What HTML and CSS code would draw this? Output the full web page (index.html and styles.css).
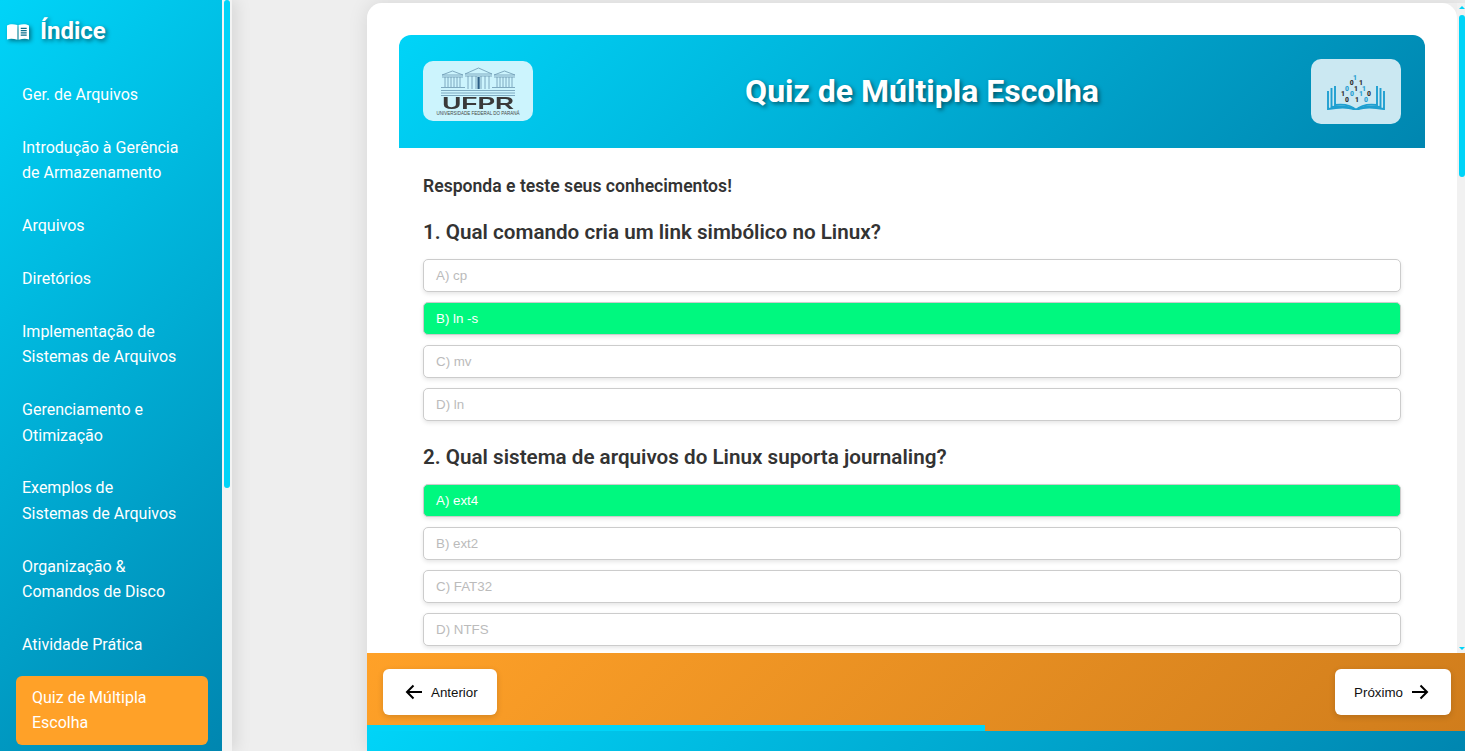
FILE: index.html
```html
<!DOCTYPE html>
<html lang="pt-BR">
<head>
  <meta charset="UTF-8">
  <title>Quiz de Múltipla Escolha</title>
  <link rel="stylesheet" href="styles.css">
</head>
<body>

<aside class="sidebar">
  <nav class="menu">
    <h2 class="menu-title">
      <svg class="menu-icon" viewBox="0 0 24 18">
        <path d="M0 2.500C3 .8 7 .6 11.400 2v16C7 16.800 3 16.800 0 17.600z" fill="#fff"/>
        <path d="M12.600 2C17 .6 21 .8 24 2.500v15.100c-3-.8-7-.8-11.400.4z" fill="#fff"/>
        <path d="M15 5.500h6.500M15 8h6.500M15 10.500h6.500M15 13h6.500" stroke="#0a6f8c" stroke-width="1.300"/>
      </svg>
      Índice
    </h2>
    <a class="menu-link" href="#">Ger. de Arquivos</a>
    <a class="menu-link" href="#">Introdução à Gerência<br>de Armazenamento</a>
    <a class="menu-link" href="#">Arquivos</a>
    <a class="menu-link" href="#">Diretórios</a>
    <a class="menu-link" href="#">Implementação de<br>Sistemas de Arquivos</a>
    <a class="menu-link" href="#">Gerenciamento e<br>Otimização</a>
    <a class="menu-link" href="#">Exemplos de<br>Sistemas de Arquivos</a>
    <a class="menu-link" href="#">Organização &amp;<br>Comandos de Disco</a>
    <a class="menu-link" href="#">Atividade Prática</a>
    <a class="menu-link active" href="#">Quiz de Múltipla<br>Escolha</a>
  </nav>
  <div class="side-scroll"><div class="side-thumb"></div></div>
</aside>

<main class="main">
  <div class="panel">
    <div class="panel-top">
      <div class="quiz-area">
        <header class="quiz-header">
          <div class="logo logo-ufpr">
            <svg class="ufpr-art" viewBox="0 0 74 29">
              <g fill="none" stroke="#6a97b0" stroke-width="0.800">
                <path d="M1 8h21L11.500 4zM24 7h27L37.500 1zM53 8h21L63.500 4z"/>
                <path d="M1 10h21M24 9h27M53 10h21"/>
                <path d="M4 10v10M7 10v10M10 10v10M13 10v10M16 10v10M19 10v10"/>
                <path d="M56 10v10M59 10v10M62 10v10M65 10v10M68 10v10M71 10v10"/>
                <path d="M27 9v13M31 9v13M35 9v13M40 9v13M44 9v13M48 9v13"/>
                <path d="M0 20.500h24M51 20.500h23M0 23.500h74M0 26h74M0 28.500h74"/>
              </g>
              <path d="M36.500 10h2.200v12h-2.200z" fill="#2c5f86"/>
            </svg>
            <span class="ufpr-name">UFPR</span>
            <span class="ufpr-sub">UNIVERSIDADE FEDERAL DO PARANÁ</span>
          </div>
          <h1 class="quiz-title">Quiz de Múltipla Escolha</h1>
          <div class="logo logo-book">
            <svg class="book-art" viewBox="0 0 58 36">
              <g font-family="Roboto, sans-serif" font-size="6.800" font-weight="900" text-anchor="middle">
                <text x="28" y="5.500" fill="#2a9fd0">1</text>
                <text x="24.700" y="11" fill="#333">0</text>
                <text x="34" y="11" fill="#333">1</text>
                <text x="20" y="16.500" fill="#2a9fd0">0</text>
                <text x="29" y="16.500" fill="#333">1</text>
                <text x="37" y="16.500" fill="#2a9fd0">1</text>
                <text x="16" y="22" fill="#333">1</text>
                <text x="25" y="22" fill="#2a9fd0">0</text>
                <text x="34" y="22" fill="#2a9fd0">1</text>
                <text x="42" y="22" fill="#333">0</text>
                <text x="20" y="27.500" fill="#333">0</text>
                <text x="30" y="27.500" fill="#333">1</text>
                <text x="39" y="27.500" fill="#2a9fd0">0</text>
              </g>
              <g fill="none" stroke="#1f9fd0" stroke-width="1.900">
                <path d="M1 17v18c11-2 22-2 28 1c6-3 17-3 28-1V17"/>
                <path d="M4.500 14v19c9-1 19-1 24.500 3c5.500-4 15.500-4 24.500-3V14"/>
                <path d="M8 12v19c8-1 16 0 21 5c5-5 13-6 21-5V12"/>
              </g>
            </svg>
          </div>
        </header>

        <section class="quiz-body">
          <p class="quiz-lead">Responda e teste seus conhecimentos!</p>

          <div class="question">
            <h3>1. Qual comando cria um link simbólico no Linux?</h3>
            <button class="option">A) cp</button>
            <button class="option correct">B) ln -s</button>
            <button class="option">C) mv</button>
            <button class="option">D) ln</button>
          </div>

          <div class="question">
            <h3>2. Qual sistema de arquivos do Linux suporta journaling?</h3>
            <button class="option correct">A) ext4</button>
            <button class="option">B) ext2</button>
            <button class="option">C) FAT32</button>
            <button class="option">D) NTFS</button>
          </div>
        </section>
      </div>

      <div class="quiz-scroll">
        <span class="arrow-up"></span>
        <div class="quiz-thumb"></div>
        <span class="arrow-down"></span>
      </div>
    </div>

    <div class="pager">
      <button class="pager-btn btn-prev">
        <svg class="pager-icon" viewBox="0 0 18 16"><path d="M17 8H2M8.500 1.500L2 8l6.500 6.500"/></svg>
        Anterior
      </button>
      <button class="pager-btn btn-next">
        Próximo
        <svg class="pager-icon" viewBox="0 0 18 16"><path d="M1 8h15M9.500 1.500L16 8l-6.500 6.500"/></svg>
      </button>
      <div class="progress-fill" style="width: 56.3%"></div>
    </div>

    <div class="bottom-bar"></div>
  </div>
</main>

</body>
</html>
```

FILE: styles.css
```css
* {
  box-sizing: border-box;
}

html, body {
  height: 100%;
  margin: 0;
  overflow: hidden;
}

body {
  display: flex;
  font-family: 'Roboto', sans-serif;
  background: #eeeeee;
  color: #333;
}

/* sidebar */
.sidebar {
  width: 232px;
  flex-shrink: 0;
  display: flex;
  position: relative;
  z-index: 2;
  box-shadow: 4px 0 15px rgba(0,0,0,0.1);
}

.menu {
  width: 222px;
  height: 100%;
  padding: 0 14px 0 16px;
  background: linear-gradient(135deg, #00d4f8, #0086b0);
  overflow: hidden;
}

.menu-title {
  display: flex;
  align-items: center;
  gap: 11px;
  margin: 0 0 0 -9px;
  padding: 17px 0 28.400px;
  font-size: 24px;
  line-height: 28px;
  font-weight: 700;
  color: #fff;
  text-shadow: 2px 2px 4px rgba(0,0,0,0.5);
}

.menu-icon {
  width: 22px;
  height: 17px;
  filter: drop-shadow(2px 2px 2px rgba(0,0,0,0.45));
}

.menu-link {
  display: block;
  padding: 8.500px 6px;
  margin-bottom: 10.200px;
  font-size: 16px;
  line-height: 25.600px;
  color: #fff;
  text-decoration: none;
  border-radius: 6px;
}

.menu-link.active {
  padding-left: 16px;
  background: #ffa128;
}

.side-scroll {
  width: 10px;
  background: #f3f3f3;
  padding: 0 2px;
}

.side-thumb {
  height: 488px;
  background: #00d4f8;
  border-radius: 3px;
}

/* main panel */
.main {
  flex: 1;
  min-width: 0;
  padding: 3px 0 0 135px;
}

.panel {
  height: 100%;
  display: flex;
  flex-direction: column;
  border-radius: 15px 0 0 0;
  box-shadow: 0 0 20px rgba(0,0,0,0.1);
}

.panel-top {
  flex: 1;
  min-height: 0;
  display: flex;
}

.quiz-area {
  flex: 1;
  min-width: 0;
  padding: 32px 32px 0;
  background: #fff;
  border-radius: 15px 15px 0 0;
  overflow: hidden;
}

.quiz-header {
  height: 113px;
  display: flex;
  align-items: center;
  justify-content: space-between;
  padding: 0 24px;
  background: linear-gradient(135deg, #00d4f8, #0086b0);
  border-radius: 12px 12px 0 0;
}

.quiz-title {
  margin: 0 0 2px;
  font-size: 32px;
  font-weight: 700;
  color: #fff;
  text-shadow: 2px 2px 4px rgba(0,0,0,0.5);
}

.logo {
  border-radius: 10px;
  display: flex;
  flex-direction: column;
  align-items: center;
  justify-content: center;
}

.logo-ufpr {
  width: 110px;
  height: 60px;
  margin-top: -1px;
  padding-top: 1px;
  background: #ccf4fd;
}

.ufpr-art {
  width: 74px;
  height: 29px;
}

.ufpr-name {
  margin-top: 1px;
  font-family: 'Liberation Sans', sans-serif;
  font-size: 17px;
  line-height: 14px;
  font-weight: 700;
  color: #3a3a3a;
  transform: scaleX(1.55);
}

.ufpr-sub {
  font-family: 'Liberation Sans', sans-serif;
  font-size: 4.500px;
  line-height: 6px;
  white-space: nowrap;
  color: #444;
}

.logo-book {
  width: 90px;
  height: 65px;
  background: #cbe8f2;
}

.book-art {
  width: 58px;
  height: 36px;
}

.quiz-body {
  padding: 27px 24px 0;
}

.quiz-lead {
  margin: 0 0 22px;
  font-size: 17.600px;
  line-height: 22px;
  font-weight: 600;
}

.question {
  margin-bottom: 23px;
}

.question h3 {
  margin: 0 0 14px;
  font-size: 20.640px;
  line-height: 26px;
  font-weight: 600;
}

.option {
  display: block;
  width: 100%;
  height: 33px;
  margin-bottom: 10px;
  padding: 0 12px;
  background: #fff;
  border: 1px solid #ccc;
  border-radius: 5px;
  box-shadow: 0 2px 4px rgba(0,0,0,0.1);
  font-family: 'Liberation Sans', sans-serif;
  font-size: 13.333px;
  color: #bbb;
  text-align: left;
}

.option.correct {
  background: #00f87f;
  color: #fff;
}

/* fake scrollbar of the quiz */
.quiz-scroll {
  width: 8px;
  flex-shrink: 0;
  background: #f1f1f1;
  position: relative;
}

.quiz-thumb {
  position: absolute;
  top: 12px;
  right: 0;
  width: 6px;
  height: 162px;
  background: #00d4f8;
  border-radius: 3px;
}

.arrow-up, .arrow-down {
  position: absolute;
  right: 0;
  width: 0;
  height: 0;
  border-left: 3px solid transparent;
  border-right: 3px solid transparent;
}

.arrow-up {
  top: 3px;
  border-bottom: 3px solid #00d4f8;
}

.arrow-down {
  bottom: 3px;
  border-top: 3px solid #00d4f8;
}

/* footer buttons */
.pager {
  height: 78px;
  flex-shrink: 0;
  position: relative;
  display: flex;
  align-items: center;
  justify-content: space-between;
  padding: 0 14px 0 16px;
  background: linear-gradient(135deg, #ffa128, #d07d1c);
}

.pager-btn {
  height: 46px;
  display: flex;
  align-items: center;
  gap: 8px;
  background: #fff;
  border: none;
  border-radius: 6px;
  box-shadow: 0 2px 6px rgba(0,0,0,0.15);
  font-family: 'Liberation Sans', sans-serif;
  font-size: 13.333px;
  color: #111;
}

.btn-prev {
  padding: 0 19px 0 22px;
}

.btn-next {
  padding: 0 22px 0 19px;
}

.pager-icon {
  width: 18px;
  height: 16px;
  fill: none;
  stroke: #000;
  stroke-width: 2;
}

.progress-fill {
  position: absolute;
  left: 0;
  bottom: 0;
  height: 6px;
  background: #00d4f8;
}

.bottom-bar {
  height: 20px;
  flex-shrink: 0;
  background: linear-gradient(135deg, #00d4f8, #0086b0);
}
```
